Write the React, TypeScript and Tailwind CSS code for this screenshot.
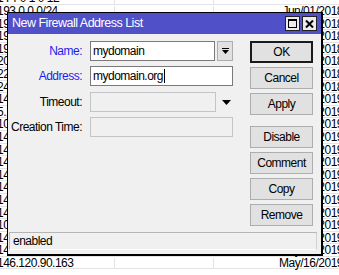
import React from "react";

// rows of the address list lying behind the dialog
const rows: { addr: string; date: string }[] = [
  { addr: "1 Pr 0 1 0 12", date: "" },
  { addr: "193.0.0.0/24", date: "Jun/01/2018" },
  { addr: "193.105.134.0/24", date: "Jun/01/2018" },
  { addr: "194.9.94.0/24", date: "Jun/01/2018" },
  { addr: "194.50.99.0/24", date: "Jun/01/2018" },
  { addr: "209.85.128.0/17", date: "Jun/01/2018" },
  { addr: "224.0.0.0/4", date: "Jun/01/2018" },
  { addr: "240.0.0.0/4", date: "Jun/01/2018" },
  { addr: "14.139.56.74", date: "Jan/12/2019" },
  { addr: "5.188.10.176", date: "Jan/14/2019" },
  { addr: "103.99.0.122", date: "Feb/02/2019" },
  { addr: "141.98.80.74", date: "Feb/11/2019" },
  { addr: "141.98.81.38", date: "Mar/03/2019" },
  { addr: "141.98.81.62", date: "Mar/21/2019" },
  { addr: "145.239.8.19", date: "Apr/02/2019" },
  { addr: "146.185.25.180", date: "Apr/09/2019" },
  { addr: "146.185.25.183", date: "Apr/17/2019" },
  { addr: "146.185.25.185", date: "Apr/20/2019" },
  { addr: "109.248.9.14", date: "Apr/28/2019" },
  { addr: "141.98.80.102", date: "May/03/2019" },
  { addr: "146.120.90.161", date: "May/09/2019" },
  { addr: "146.120.90.163", date: "May/16/2019" },
];

const font = "font-['Liberation_Sans',Arial,sans-serif] tracking-[-0.5px]";

function Btn({ label, primary }: { label: string; primary?: boolean }) {
  return (
    <div
      className={
        "flex h-[22px] w-[63px] items-center justify-center bg-[#e1e1e1] text-[12px] text-black " +
        (primary ? "border-2 border-[#1b1b1b]" : "border border-[#adadad]")
      }
    >
      {label}
    </div>
  );
}

function Field({ children, disabled, w }: { children?: React.ReactNode; disabled?: boolean; w: string }) {
  return (
    <div
      className={
        "flex h-[20px] items-center border pl-[2px] text-[12px] text-black " +
        w +
        (disabled ? " border-[#c4c4c4] bg-[#f0f0f0]" : " border-[#7a7a7a] bg-white")
      }
    >
      {children}
    </div>
  );
}

export default function App() {
  return (
    <div className={"relative h-[275px] w-[339px] overflow-hidden bg-white " + font}>
      {/* list behind */}
      <div className="-mt-[7.6px] flex flex-col">
        {rows.map((r, i) => (
          <div key={i} className="flex h-[12.6px] border-b border-[#e3e3e3] pt-[1px] text-[12px] leading-[11px] text-black">
            <div className="w-[115px] shrink-0 overflow-hidden whitespace-nowrap border-r border-[#e3e3e3]">
              <span className="-ml-[3px] block">{r.addr}</span>
            </div>
            <div className="w-[99px] shrink-0 border-r border-[#e3e3e3]" />
            <div className="flex w-[130px] shrink-0 justify-end whitespace-nowrap pr-[1px]">{r.date}</div>
          </div>
        ))}
      </div>

      {/* dialog window */}
      <div className="absolute left-[7px] top-[12px] flex h-[244px] w-[316px] flex-col border-b-2 border-l border-r-2 border-t border-black bg-[#f0f0f0]">
        <div className="flex h-[21px] items-center justify-between bg-[#5050c8] pl-[4px] pr-[4px]">
          <span className="text-[12.5px] text-white">New Firewall Address List</span>
          <div className="flex gap-[2px]">
            <div className="flex h-[15px] w-[15px] items-center justify-center border border-[#222] bg-[#ececec]">
              <svg width="9" height="9" viewBox="0 0 9 9">
                <rect x="0.5" y="0.5" width="8" height="8" fill="none" stroke="#000" />
                <rect x="0" y="0" width="9" height="2" fill="#000" />
              </svg>
            </div>
            <div className="flex h-[15px] w-[15px] items-center justify-center border border-[#222] bg-[#ececec]">
              <svg width="9" height="8" viewBox="0 0 9 8">
                <path d="M1 0.5 L8 7.5 M8 0.5 L1 7.5" stroke="#000" strokeWidth="2" />
              </svg>
            </div>
          </div>
        </div>

        <div className="flex h-[198px] pt-[7px]">
          <div className="flex flex-col">
            <div className="flex h-[20px] items-center">
              <span className="w-[75px] whitespace-nowrap pr-[1px] text-right text-[12px] text-[#1c1cf0]">Name:</span>
              <div className="ml-[7px] flex items-center gap-[2px]">
                <Field w="w-[125px]">mydomain</Field>
                <div className="flex h-[20px] w-[16px] items-center justify-center border border-[#adadad] bg-[#e1e1e1]">
                  <svg width="7" height="7" viewBox="0 0 7 7">
                    <rect x="0" y="0" width="7" height="1" fill="#000" />
                    <polygon points="0,2 7,2 3.5,6" fill="#000" />
                  </svg>
                </div>
              </div>
            </div>
            <div className="mt-[5px] flex h-[20px] items-center">
              <span className="w-[75px] whitespace-nowrap pr-[1px] text-right text-[12px] text-[#1c1cf0]">Address:</span>
              <div className="ml-[7px]">
                <Field w="w-[143px]">
                  <span>mydomain.org</span>
                  <span className="ml-[1px] h-[14px] w-[1px] bg-black" />
                </Field>
              </div>
            </div>
            <div className="mt-[6px] flex h-[20px] items-center">
              <span className="w-[75px] whitespace-nowrap pr-[1px] text-right text-[12px] text-black">Timeout:</span>
              <div className="ml-[7px] flex items-center">
                <Field w="w-[126px]" disabled />
                <svg className="ml-[6px]" width="9" height="5" viewBox="0 0 9 5">
                  <polygon points="0,0 9,0 4.5,5" fill="#000" />
                </svg>
              </div>
            </div>
            <div className="mt-[5px] flex h-[20px] items-center">
              <span className="w-[75px] whitespace-nowrap pr-[1px] text-right text-[12px] text-black">Creation Time:</span>
              <div className="ml-[7px]">
                <Field w="w-[143px]" disabled />
              </div>
            </div>
          </div>

          <div className="ml-[17px] flex flex-col">
            <Btn label="OK" primary />
            <div className="mt-[4px] flex flex-col gap-[4px]">
              <Btn label="Cancel" />
              <Btn label="Apply" />
            </div>
            <div className="mt-[11px] flex flex-col gap-[4px]">
              <Btn label="Disable" />
              <Btn label="Comment" />
              <Btn label="Copy" />
              <Btn label="Remove" />
            </div>
          </div>
        </div>

        <div className="ml-[1px] mr-[4px] flex h-[18px] items-center border border-[#b5b5b5] border-b-white border-r-[#d0d0d0] pl-[3px] text-[12px] text-black">
          enabled
        </div>
      </div>
    </div>
  );
}
